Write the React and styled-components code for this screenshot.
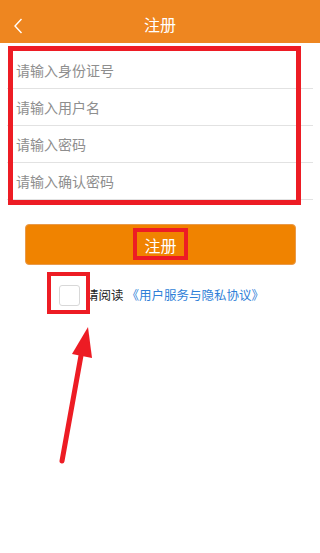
import React from "react";
import styled, { createGlobalStyle } from "styled-components";

const Global = createGlobalStyle`
  html, body { margin: 0; padding: 0; background: #fff; }
  body { font-family: "Noto Sans CJK SC", "Noto Sans", sans-serif; }
  * { box-sizing: border-box; }
`;

const Page = styled.div`
  position: relative;
  width: 320px;
  height: 553px;
  background: #fff;
  overflow: hidden;
`;

const Header = styled.header`
  position: relative;
  height: 43px;
  background: #ee8620;
  display: flex;
  align-items: center;
  justify-content: center;
  padding-top: 4px;
`;

const Back = styled.button`
  position: absolute;
  left: 11px;
  top: 17px;
  width: 14px;
  height: 18px;
  padding: 0;
  border: 0;
  background: none;
  display: flex;
  align-items: center;
  justify-content: center;
`;

const Title = styled.h1`
  margin: 0;
  font-size: 16px;
  font-weight: 400;
  color: #fff;
  line-height: 1;
`;

const Form = styled.div`
  margin: 9px 7px 0 7px;
  display: flex;
  flex-direction: column;
`;

const Row = styled.div`
  height: 37px;
  border-bottom: 1px solid #e2e2e2;
  display: flex;
  align-items: center;
  padding-left: 9px;
  padding-bottom: 1px;
`;

const Placeholder = styled.span`
  font-size: 14px;
  color: #8e8e8e;
  line-height: 1;
`;

const Submit = styled.button`
  margin: 24px 24px 0 25px;
  height: 41px;
  width: 271px;
  border-radius: 4px;
  border: 1px solid #e99a4a;
  background: #f08300;
  color: #fff;
  font-family: inherit;
  font-size: 16px;
  display: flex;
  align-items: center;
  justify-content: center;
  padding: 0;
`;

const Agree = styled.div`
  margin: 19px 0 0 59px;
  display: flex;
  align-items: center;
  height: 22px;
`;

const Check = styled.span`
  width: 21px;
  height: 21px;
  border: 1px solid #d8d8d8;
  border-radius: 3px;
  background: #fff;
  margin-right: 6px;
`;

const AgreeText = styled.span`
  font-size: 12.5px;
  color: #222;
  line-height: 1;
`;

const Link = styled.span`
  font-size: 12.5px;
  color: #2f7fd8;
  line-height: 1;
  margin-left: 3px;
`;

const Mark = styled.div`
  position: absolute;
  border: ${(p) => p.$w}px solid #ed1c24;
  left: ${(p) => p.$x}px;
  top: ${(p) => p.$y}px;
  width: ${(p) => p.$wd}px;
  height: ${(p) => p.$h}px;
  pointer-events: none;
`;

const Arrow = styled.svg`
  position: absolute;
  left: 0;
  top: 0;
  pointer-events: none;
`;

const fields = ["请输入身份证号", "请输入用户名", "请输入密码", "请输入确认密码"];

export default function App() {
  return (
    <Page>
      <Global />
      <Header>
        <Back aria-label="返回">
          <svg width="10" height="16" viewBox="0 0 10 16">
            <path d="M8.5 1 L2 8 L8.5 15" fill="none" stroke="#fff" strokeWidth="1.4" />
          </svg>
        </Back>
        <Title>注册</Title>
      </Header>
      <Form>
        {fields.map((f) => (
          <Row key={f}>
            <Placeholder>{f}</Placeholder>
          </Row>
        ))}
      </Form>
      <Submit>注册</Submit>
      <Agree>
        <Check />
        <AgreeText>请阅读</AgreeText>
        <Link>《用户服务与隐私协议》</Link>
      </Agree>

      <Mark $x={8} $y={46} $wd={293} $h={159} $w={5} />
      <Mark $x={133} $y={228} $wd={55} $h={32} $w={4} />
      <Mark $x={47} $y={272} $wd={43} $h={42} $w={4.5} />
      <Arrow width="320" height="553" viewBox="0 0 320 553">
        <line x1="62" y1="461" x2="82" y2="350" stroke="#ed1c24" strokeWidth="5" strokeLinecap="round" />
        <polygon points="88,327 72,354 92,358" fill="#ed1c24" />
      </Arrow>
    </Page>
  );
}
